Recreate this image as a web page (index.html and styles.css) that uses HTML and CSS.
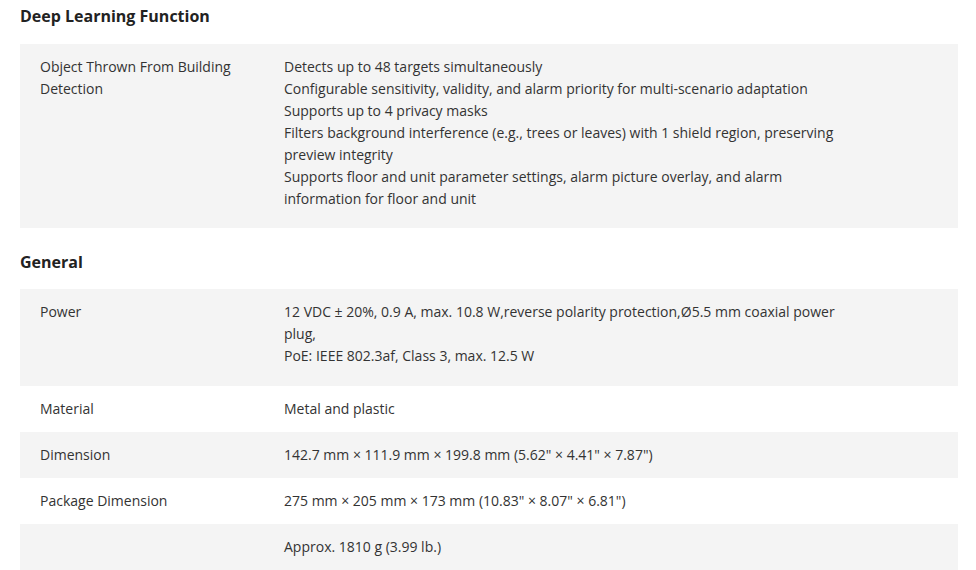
FILE: index.html
```html
<!DOCTYPE html>
<html lang="en">
<head>
<meta charset="utf-8">
<title>Specifications</title>
<link rel="stylesheet" href="styles.css">
</head>
<body>
<div class="specs">
  <section class="section first">
    <h2 class="section-title">Deep Learning Function</h2>
    <div class="table">
      <div class="row shaded multi">
        <div class="label">Object Thrown From Building Detection</div>
        <div class="value">Detects up to 48 targets simultaneously<br>Configurable sensitivity, validity, and alarm priority for multi-scenario adaptation<br>Supports up to 4 privacy masks<br>Filters background interference (e.g., trees or leaves) with 1 shield region, preserving preview integrity<br>Supports floor and unit parameter settings, alarm picture overlay, and alarm information for floor and unit</div>
      </div>
    </div>
  </section>
  <section class="section">
    <h2 class="section-title">General</h2>
    <div class="table">
      <div class="row shaded multi tall">
        <div class="label">Power</div>
        <div class="value">12 VDC ± 20%, 0.9 A, max. 10.8 W,reverse polarity protection,Ø5.5 mm coaxial power plug,<br>PoE: IEEE 802.3af, Class 3, max. 12.5 W</div>
      </div>
      <div class="row">
        <div class="label">Material</div>
        <div class="value">Metal and plastic</div>
      </div>
      <div class="row shaded">
        <div class="label">Dimension</div>
        <div class="value">142.7 mm × 111.9 mm × 199.8 mm (5.62" × 4.41" × 7.87")</div>
      </div>
      <div class="row">
        <div class="label">Package Dimension</div>
        <div class="value">275 mm × 205 mm × 173 mm (10.83" × 8.07" × 6.81")</div>
      </div>
      <div class="row shaded">
        <div class="label"></div>
        <div class="value">Approx. 1810 g (3.99 lb.)</div>
      </div>
    </div>
  </section>
</div>
</body>
</html>
```

FILE: styles.css
```css
html, body {
  margin: 0;
  padding: 0;
  background: #ffffff;
}

body {
  font-family: "Open Sans", "Liberation Sans", sans-serif;
  font-size: 14px;
  line-height: 22px;
  color: #333333;
}

.specs {
  padding: 4px 18px 0 20px;
}

.section + .section {
  margin-top: 22px;
}

.section-title {
  margin: 0 0 16px 0;
  font-size: 16px;
  line-height: 24px;
  font-weight: 700;
  color: #222222;
}

.section + .section .section-title {
  margin-bottom: 15px;
}

.row {
  display: grid;
  grid-template-columns: 244px 563px;
  padding: 12px 20px;
}

.row.multi {
  padding-bottom: 18px;
}

.row.multi.tall {
  padding-bottom: 19px;
}

.row.shaded {
  background: #f4f4f4;
}
```
